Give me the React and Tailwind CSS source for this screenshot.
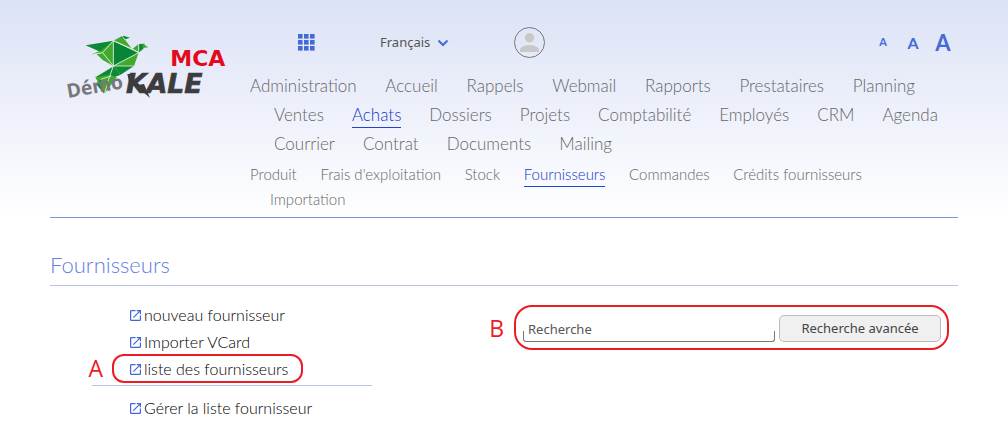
import React from "react";

const MENU = [
  { cls: "max-w-[665px]", items: ["Administration", "Accueil", "Rappels", "Webmail", "Rapports", "Prestataires", "Planning"] },
  { cls: "ml-6 max-w-[664px]", items: ["Ventes", "Achats", "Dossiers", "Projets", "Comptabilité", "Employés", "CRM", "Agenda"] },
  { cls: "ml-6 max-w-[338px]", items: ["Courrier", "Contrat", "Documents", "Mailing"] },
];

const SUBMENU = [
  { cls: "max-w-[612px]", items: ["Produit", "Frais d'exploitation", "Stock", "Fournisseurs", "Commandes", "Crédits fournisseurs"] },
  { cls: "ml-5", items: ["Importation"] },
];

function Logo() {
  return (
    <svg viewBox="0 0 600 270" className="mt-5 h-[90px] w-[200px] shrink-0" role="img" aria-label="MCA KALE">
      <polygon points="107,76 190,62 158,98 140,91" fill="#0c8a37" />
      <polygon points="190,62 158,98 120,104 152,92" fill="#43a82e" />
      <polygon points="158,98 190,62 190,138" fill="#43a82e" />
      <polygon points="140,103 158,98 190,138 158,120" fill="#43a82e" />
      <polygon points="190,62 266,98 190,138" fill="#078436" />
      <polygon points="190,62 216,48 246,86 236,84" fill="#43a82e" />
      <polygon points="212,52 220,47 240,53 226,58" fill="#0c8a37" />
      <polygon points="246,88 266,72 266,98" fill="#43a82e" />
      <polygon points="266,98 266,72 284,71 280,86" fill="#0c8a37" />
      <polygon points="278,71 295,82 278,84" fill="#43a82e" />
      <polygon points="266,98 252,138 190,138" fill="#43a82e" />
      <polygon points="190,138 252,138 212,164" fill="#0c8a37" />
      <polygon points="190,138 134,172 178,174" fill="#0c8a37" />
      <polygon points="190,138 176,178 212,164" fill="#0c8a37" />
      <polygon points="180,164 136,172 163,222 200,172" fill="#43a82e" />
      <polygon points="152,178 163,222 138,192" fill="#0c8a37" />
      <path
        d="M190,62 L158,98 L190,138 L266,98 L190,62 V138 H252 M190,138 L134,172 M190,138 L176,178 L163,222 M190,62 L246,86 L266,98 V72 M216,48 L226,60 M158,98 L120,104 M152,178 L184,168"
        fill="none"
        stroke="#dff0e0"
        strokeWidth="2.5"
        strokeLinejoin="round"
      />
      <text x="361" y="138" fontSize="66" fontWeight="700" fontFamily="DejaVu Sans, sans-serif" fill="#e30a1e">MCA</text>
      <path d="M232,162 L250,162 L240,198 Z" fill="#3c3c3e" />
      <text x="228" y="220" fontSize="80" fontWeight="700" fontStyle="italic" fontFamily="DejaVu Sans, sans-serif" fill="#3c3c3e" stroke="#3c3c3e" strokeWidth="2">KALE</text>
      <path d="M256,196 L282,192 L300,234 Z" fill="#3c3c3e" />
      <text x="54" y="234" fontSize="58" fontWeight="700" fontFamily="Open Sans, sans-serif" fill="#77777a" transform="rotate(-10 54 234)">Démo</text>
    </svg>
  );
}

function MenuRows({ rows, active, rowClass, linkClass }) {
  return rows.map((row) => (
    <ul key={row.items[0]} className={`flex items-center justify-between ${rowClass} ${row.cls}`}>
      {row.items.map((item) => (
        <li key={item} className="flex">
          <a
            href="#"
            aria-current={item === active ? "page" : undefined}
            className={`whitespace-nowrap border-b ${linkClass} ${
              item === active ? "border-[#1c46cc] text-[#1038c8]" : "border-transparent text-[#666]"
            }`}
          >
            {item}
          </a>
        </li>
      ))}
    </ul>
  ));
}

function OpenIcon() {
  return (
    <svg viewBox="3 3 18 18" className="mt-0.5 h-[11px] w-[11px] shrink-0 fill-[#4169d8]" aria-hidden="true">
      <path d="M19 19H5V5h7V3H5a2 2 0 0 0-2 2v14a2 2 0 0 0 2 2h14c1.1 0 2-.9 2-2v-7h-2v7zM14 3v2h3.59l-9.83 9.83 1.41 1.41L19 6.41V10h2V3h-7z" />
    </svg>
  );
}

function ActionLink({ children, marker }) {
  return (
    <li className="relative flex h-[27px] items-center pl-[38px]">
      {marker && (
        <>
          <span className="absolute inset-y-[-1px] left-5 w-[191px] rounded-xl border-2 border-[#ed1c24]" />
          <span className="absolute right-full mr-[-11px] font-['Open_Sans',sans-serif] text-[23px] text-[#ed1c24]">{marker}</span>
        </>
      )}
      <a href="#" className="relative flex items-center gap-[3px] whitespace-nowrap text-[16px] font-light leading-[25px] text-black">
        <OpenIcon />
        {children}
      </a>
    </li>
  );
}

function TopBar() {
  return (
    <div className="flex h-[31px] items-center pl-12">
      <button type="button" aria-label="Applications" className="shrink-0">
        <svg viewBox="0 0 17 17" className="h-[17px] w-[17px] fill-[#446ad8]">
          {[0, 6, 12].map((y) => [0, 6, 12].map((x) => <rect key={`${x}-${y}`} x={x} y={y} width="4.6" height="4.6" />))}
        </svg>
      </button>
      <div className="relative ml-[65px] flex w-[70px] items-center">
        <select aria-label="Langue" className="w-full appearance-none bg-transparent font-['Noto_Sans',sans-serif] text-[13px] text-[#555]">
          <option>Français</option>
        </select>
        <svg viewBox="0 0 12 8" className="pointer-events-none absolute right-px h-2 w-3" fill="none" stroke="#446ad8" strokeWidth="2">
          <path d="M1.5 1.5 L6 6 L10.5 1.5" />
        </svg>
      </div>
      <button type="button" aria-label="Profil" className="ml-16 shrink-0">
        <svg viewBox="0 0 31 31" className="h-[31px] w-[31px]">
          <circle cx="15.5" cy="15.5" r="15" fill="none" stroke="#777" />
          <circle cx="15.5" cy="10.8" r="4.7" fill="#c8c8c8" />
          <path d="M6 25v-2.2c0-3.2 6.4-4.8 9.5-4.8s9.5 1.6 9.5 4.8V25z" fill="#c8c8c8" />
        </svg>
      </button>
      <div className="ml-auto flex items-center font-['Lato',sans-serif] font-bold text-[#446ad8]">
        <button type="button" aria-label="Petite taille de texte" className="w-[30px] text-[11px]">A</button>
        <button type="button" aria-label="Taille de texte moyenne" className="w-[30px] text-[16px]">A</button>
        <button type="button" aria-label="Grande taille de texte" className="w-[30px] text-[22px]">A</button>
      </div>
    </div>
  );
}

export default function App() {
  return (
    <div className="bg-white font-['Lato',sans-serif]">
      <header className="bg-gradient-to-b from-[#dce2f6] to-white px-[50px]">
        <div className="flex border-b border-[#7a93de]">
          <Logo />
          <div className="min-w-0 flex-1 pb-[5px] pt-[27px]">
            <TopBar />
            <nav aria-label="Menu principal" className="mt-3.5">
              <MenuRows rows={MENU} active="Achats" rowClass="h-[29px]" linkClass="text-[17px] leading-6 font-light" />
            </nav>
            <nav aria-label="Sous-menu" className="mt-[3px]">
              <MenuRows rows={SUBMENU} active="Fournisseurs" rowClass="h-[25px]" linkClass="text-[15px] leading-[23px] font-light" />
            </nav>
          </div>
        </div>
      </header>

      <main className="px-[50px] pb-4">
        <h1 className="mt-[27px] border-b border-[#b9c4ea] text-[22px] font-light leading-10 text-[#5f80e0]">Fournisseurs</h1>
        <div className="mt-[15px] grid grid-cols-2">
          <div className="ml-[42px] w-[280px]">
            <ul>
              <ActionLink>nouveau fournisseur</ActionLink>
              <ActionLink>Importer VCard</ActionLink>
              <ActionLink marker="A">liste des fournisseurs</ActionLink>
            </ul>
            <hr className="mt-[3px] border-[#b9c4ea]" />
            <ul className="mt-2">
              <ActionLink>Gérer la liste fournisseur</ActionLink>
            </ul>
          </div>
          <form className="relative ml-2.5 mr-[9px] mt-1 flex items-center gap-1 self-start rounded-[18px] border-2 border-[#ed1c24] pb-1.5 pl-[7px] pr-1.5 pt-2 font-['Noto_Sans',sans-serif]">
            <span className="absolute right-full mr-3 font-['Open_Sans',sans-serif] text-[23px] text-[#ed1c24]">B</span>
            <div className="relative flex min-w-0 flex-1">
              <span className="pointer-events-none absolute inset-x-0 bottom-0 h-[11px] rounded-b-[3px] border-x border-b border-[#777]" />
              <input
                type="search"
                aria-label="Recherche"
                placeholder="Recherche"
                className="h-[26px] w-full bg-transparent px-[5px] text-[13px] text-[#333] outline-none placeholder:text-[#555]"
              />
            </div>
            <button type="button" className="h-[27px] w-[162px] rounded-[5px] border border-[#bbb] bg-[#f0f0f0] text-[13px] text-[#444]">
              Recherche avancée
            </button>
          </form>
        </div>
      </main>
    </div>
  );
}
